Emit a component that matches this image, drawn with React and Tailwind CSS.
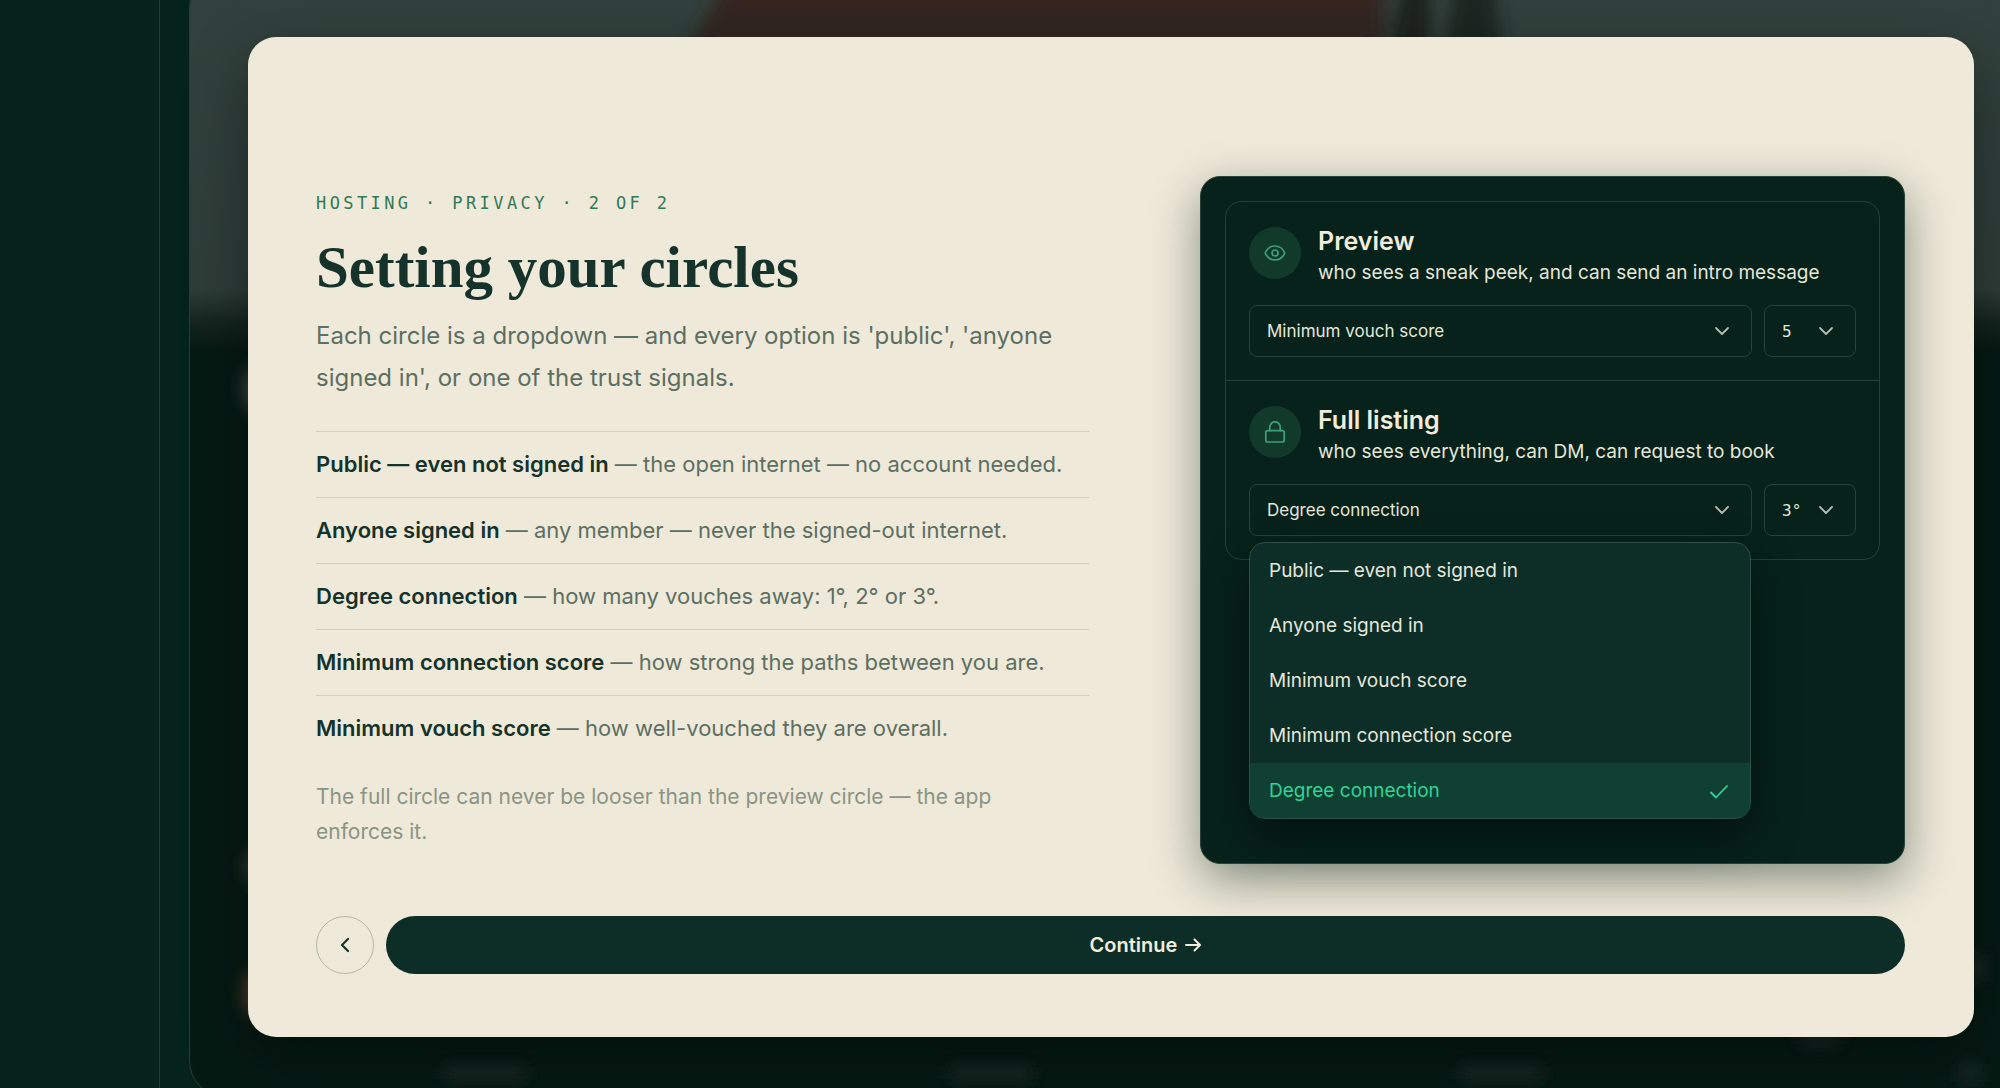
import { useState } from "react";

const options = [
  "Public — even not signed in",
  "Anyone signed in",
  "Minimum vouch score",
  "Minimum connection score",
  "Degree connection",
];

const signals = [
  { name: "Public — even not signed in", text: "the open internet — no account needed." },
  { name: "Anyone signed in", text: "any member — never the signed-out internet." },
  { name: "Degree connection", text: "how many vouches away: 1°, 2° or 3°." },
  { name: "Minimum connection score", text: "how strong the paths between you are." },
  { name: "Minimum vouch score", text: "how well-vouched they are overall." },
];

function EyeIcon() {
  return (
    <svg width="22" height="22" viewBox="0 0 22 22" fill="none" stroke="currentColor" strokeWidth="1.7" strokeLinecap="round" strokeLinejoin="round">
      <path d="M1.2 11C3 6.8 6.600 4 11 4s8 2.8 9.800 7c-1.800 4.200-5.400 7-9.800 7s-8-2.800-9.800-7z" />
      <circle cx="11" cy="11" r="3" />
    </svg>
  );
}

function LockIcon() {
  return (
    <svg width="22" height="22" viewBox="0 0 22 22" fill="none" stroke="currentColor" strokeWidth="1.7" strokeLinecap="round" strokeLinejoin="round">
      <rect x="1.8" y="9.6" width="18.4" height="11.4" rx="2" />
      <path d="M5.8 9.6V6a5.2 5.2 0 0 1 10.4 0v3.6" />
    </svg>
  );
}

function SelectBox({ label, value, onChange, items, mono }) {
  return (
    <div className="grid items-center">
      <select
        aria-label={label}
        value={value}
        onChange={(e) => onChange(e.target.value)}
        className={`col-start-1 row-start-1 h-[52px] w-full appearance-none rounded-lg border border-[#2a4138] bg-transparent px-[17px] pt-0.5 text-[#e6e6da] focus:outline-none ${
          mono ? "font-['DejaVu_Sans_Mono',monospace] text-[16px]" : "text-[17px]"
        }`}
      >
        {items.map((item) => (
          <option key={item} className="bg-[#0c2e27]">{item}</option>
        ))}
      </select>
      <svg
        className="pointer-events-none col-start-1 row-start-1 mr-[22px] justify-self-end text-[#b4bdb4]"
        width="16" height="10" viewBox="0 0 16 10" fill="none" stroke="currentColor" strokeWidth="1.8" strokeLinecap="round" strokeLinejoin="round"
      >
        <path d="M2 2l6 6 6-6" />
      </svg>
    </div>
  );
}

function CircleRow({ icon, title, text, children }) {
  return (
    <section className="p-[23px]">
      <div className="flex h-14 items-center gap-[17px]">
        <div className="flex size-[52px] shrink-0 items-center justify-center rounded-full bg-[#113a2b] text-[#3f9f78]">
          {icon}
        </div>
        <div className="pt-2">
          <h2 className="text-[25px] font-semibold leading-8 text-[#f2ecdc]">{title}</h2>
          <p className="whitespace-nowrap text-[19px] leading-8 text-[#e6e6da]">{text}</p>
        </div>
      </div>
      <div className="relative mt-6 grid grid-cols-[1fr_92px] gap-3">{children}</div>
    </section>
  );
}

// out of focus listing page behind the dialog
function Backdrop() {
  return (
    <div aria-hidden="true" className="absolute -bottom-2 -right-12 -top-7 left-[29px] -z-10 overflow-hidden rounded-[36px] border border-[#243e36] bg-[#061a14]">
      <svg width="1860" height="1122" viewBox="190 -27 1860 1122">
        <defs>
          <linearGradient id="sky" x1="0" y1="0" x2="0" y2="1">
            <stop offset="0" stopColor="#33423e" />
            <stop offset="0.84" stopColor="#2f3d39" />
            <stop offset="0.93" stopColor="#15241e" />
            <stop offset="1" stopColor="#061a14" />
          </linearGradient>
          <linearGradient id="roof" x1="0" y1="0" x2="0" y2="1">
            <stop offset="0.3" stopColor="#352624" />
            <stop offset="0.8" stopColor="#2f291f" />
          </linearGradient>
          <filter id="soft" x="-50%" y="-50%" width="200%" height="200%">
            <feGaussianBlur stdDeviation="8" />
          </filter>
        </defs>
        <rect x="190" y="-27" width="1860" height="377" fill="url(#sky)" />
        <g filter="url(#soft)">
          <path d="M732-27H1385V60H680z" fill="url(#roof)" />
          <path d="M1406-27h24v87h-42z" fill="#1f211d" />
          <path d="M1458-27h34l12 87h-62z" fill="#1b2621" />
          <rect x="244" y="366" width="40" height="46" rx="16" fill="#3d4b46" />
          <rect x="244" y="848" width="40" height="38" rx="16" fill="#2b3a35" />
          <rect x="244" y="970" width="40" height="46" rx="16" fill="#5a4029" />
          <rect x="444" y="1066" width="82" height="14" fill="#1a2a25" />
          <rect x="950" y="1066" width="82" height="14" fill="#1a2a25" />
          <rect x="1460" y="1066" width="82" height="14" fill="#1a2a25" />
          <rect x="1800" y="1034" width="40" height="12" fill="#1a2a25" />
          <rect x="1960" y="1064" width="20" height="18" fill="#1a2a25" />
          <rect x="1966" y="955" width="16" height="26" fill="#1a2a25" />
        </g>
      </svg>
    </div>
  );
}

export default function App() {
  const [preview, setPreview] = useState("Minimum vouch score");
  const [previewLevel, setPreviewLevel] = useState("5");
  const [full, setFull] = useState("Degree connection");
  const [fullLevel, setFullLevel] = useState("3°");

  return (
    <div className="flex min-h-screen overflow-hidden bg-[#05231b] font-['Inter',sans-serif]">
      <aside className="w-40 shrink-0 border-r border-[#1f3b32]" />
      <main className="relative isolate min-w-0 flex-1 pb-[52px] pl-[88px] pr-[26px] pt-[37px]">
        <Backdrop />
        <div
          role="dialog"
          aria-labelledby="circles-title"
          className="rounded-[28px] bg-[#efe9d9] pb-[63px] pl-[68px] pr-[69px] pt-[139px] shadow-[0_20px_60px_rgba(0,0,0,0.4)]"
        >
          <div className="grid grid-cols-[773fr_705fr] items-center gap-[111px]">
            <div>
              <p className="font-['DejaVu_Sans_Mono',monospace] text-[17px] leading-6 tracking-[0.2em] text-[#2f7a57]">
                HOSTING · PRIVACY · 2 OF 2
              </p>
              <h1 id="circles-title" className="mt-4 font-['Liberation_Serif',serif] text-[59px] font-bold leading-[72px] text-[#15332b]">
                Setting your circles
              </h1>
              <p className="mt-3 text-[24px] leading-[42px] text-[#5c6f62]">
                Each circle is a dropdown — and every option is 'public', 'anyone signed in', or one of the trust signals.
              </p>
              <ul className="mt-8 text-[22px] text-[#5c6f62]">
                {signals.map((s) => (
                  <li key={s.name} className="flex h-[66px] items-center whitespace-nowrap border-t border-[#cfd0bf]">
                    <span>
                      <strong className="font-semibold text-[#15332b]">{s.name}</strong> — {s.text}
                    </span>
                  </li>
                ))}
              </ul>
              <p className="mt-[18px] max-w-[700px] text-[21px] leading-[35px] text-[#8a9484]">
                The full circle can never be looser than the preview circle — the app enforces it.
              </p>
            </div>

            <div className="h-[688px] rounded-[20px] border border-[#2b4239] bg-[#06221a] p-6 shadow-[0_16px_48px_rgba(6,34,26,0.45)]">
              <div className="rounded-2xl border border-[#263e36]">
                <CircleRow icon={<EyeIcon />} title="Preview" text="who sees a sneak peek, and can send an intro message">
                  <SelectBox label="Preview circle" value={preview} onChange={setPreview} items={options} />
                  <SelectBox label="Preview level" value={previewLevel} onChange={setPreviewLevel} items={["1", "2", "3", "4", "5"]} mono />
                </CircleRow>
                <div className="border-t border-[#263e36]">
                  <CircleRow icon={<LockIcon />} title="Full listing" text="who sees everything, can DM, can request to book">
                    <SelectBox label="Full listing circle" value={full} onChange={setFull} items={options} />
                    <SelectBox label="Full listing degree" value={fullLevel} onChange={setFullLevel} items={["1°", "2°", "3°"]} mono />
                    <ul className="absolute left-0 right-[105px] top-full z-10 mt-[6px] overflow-hidden rounded-2xl border border-[#2f4e44] bg-[#0c2e27] shadow-[0_20px_48px_rgba(0,0,0,0.45)]">
                      {options.map((option) => (
                        <li key={option}>
                          <button
                            type="button"
                            onClick={() => setFull(option)}
                            className={`flex h-[55px] w-full items-center justify-between px-[19px] pt-0.5 text-[19px] ${
                              option === full ? "bg-[#0f4031] text-[#34d399]" : "text-[#e6e6da]"
                            }`}
                          >
                            {option}
                            {option === full && (
                              <svg width="24" height="24" viewBox="0 0 24 24" fill="none" stroke="currentColor" strokeWidth="1.8" strokeLinecap="round" strokeLinejoin="round">
                                <path d="M4 12.500l5 5L20 6" />
                              </svg>
                            )}
                          </button>
                        </li>
                      ))}
                    </ul>
                  </CircleRow>
                </div>
              </div>
            </div>
          </div>

          <div className="mt-[52px] flex gap-3">
            <button type="button" aria-label="Back" className="flex size-[58px] shrink-0 items-center justify-center rounded-full border border-[#b3b9a6] text-[#15332b]">
              <svg width="12" height="16" viewBox="0 0 12 16" fill="none" stroke="currentColor" strokeWidth="2.2" strokeLinecap="round" strokeLinejoin="round">
                <path d="M9 2L3 8l6 6" />
              </svg>
            </button>
            <button type="button" className="flex h-[58px] flex-1 items-center justify-center gap-2 rounded-full bg-[#0c2e27] text-[20px] font-semibold text-[#f2ecdc]">
              Continue
              <svg width="16" height="14" viewBox="0 0 16 14" fill="none" stroke="currentColor" strokeWidth="2" strokeLinecap="round" strokeLinejoin="round">
                <path d="M1 7h13.500M9.500 1.500L15 7l-5.500 5.500" />
              </svg>
            </button>
          </div>
        </div>
      </main>
    </div>
  );
}
